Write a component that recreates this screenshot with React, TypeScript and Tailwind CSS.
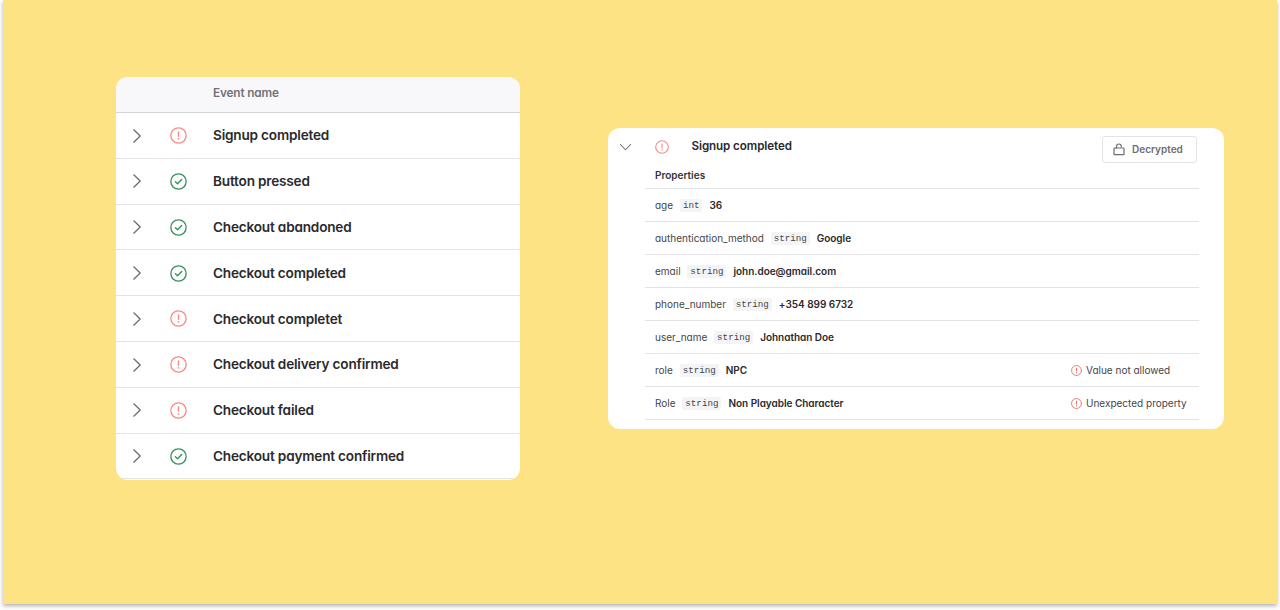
import clsx from "clsx";

type Status = "ok" | "error";

const events: { name: string; status: Status }[] = [
  { name: "Signup completed", status: "error" },
  { name: "Button pressed", status: "ok" },
  { name: "Checkout abandoned", status: "ok" },
  { name: "Checkout completed", status: "ok" },
  { name: "Checkout completet", status: "error" },
  { name: "Checkout delivery confirmed", status: "error" },
  { name: "Checkout failed", status: "error" },
  { name: "Checkout payment confirmed", status: "ok" },
];

const properties: { name: string; type: string; value: string; error?: string }[] = [
  { name: "age", type: "int", value: "36" },
  { name: "authentication_method", type: "string", value: "Google" },
  { name: "email", type: "string", value: "john.doe@gmail.com" },
  { name: "phone_number", type: "string", value: "+354 899 6732" },
  { name: "user_name", type: "string", value: "Johnathan Doe" },
  { name: "role", type: "string", value: "NPC", error: "Value not allowed" },
  { name: "Role", type: "string", value: "Non Playable Character", error: "Unexpected property" },
];

function StatusIcon({ status, className }: { status: Status; className?: string }) {
  return (
    <svg
      viewBox="0 0 16 16"
      fill="none"
      stroke="currentColor"
      strokeLinecap="round"
      strokeLinejoin="round"
      className={clsx("shrink-0", className)}
    >
      <circle cx="8" cy="8" r="7.2" strokeWidth="1.25" />
      {status === "ok" ? (
        <path d="M5.1 8.3l2 1.9 3.9-4" strokeWidth="1.3" />
      ) : (
        <>
          <path d="M8 4.6v4.2" strokeWidth="1.35" />
          <circle cx="8" cy="11.1" r="0.85" fill="currentColor" stroke="none" />
        </>
      )}
    </svg>
  );
}

function Chevron({ className }: { className?: string }) {
  return (
    <svg
      viewBox="0 0 8 14"
      fill="none"
      stroke="currentColor"
      strokeWidth="1.2"
      strokeLinecap="round"
      strokeLinejoin="round"
      className={clsx("shrink-0", className)}
    >
      <path d="M0.8 0.8L7.2 7L0.8 13.2" />
    </svg>
  );
}

function LockIcon() {
  return (
    <svg
      viewBox="0 0 12 13"
      fill="none"
      stroke="currentColor"
      strokeWidth="1.2"
      strokeLinejoin="round"
      strokeLinecap="round"
      className="h-[13px] w-3 shrink-0"
    >
      <rect x="1" y="5" width="10" height="6.6" rx="0.6" />
      <path d="M3.5 5V3.4a2.4 2.4 0 0 1 4.8 0v.3" />
    </svg>
  );
}

function EventList() {
  return (
    <div className="mt-[77px] ml-[113px] h-[403px] w-[404px] overflow-hidden rounded-xl bg-white">
      <div className="flex h-9 items-center border-b border-[#d4d4d9] bg-[#f8f8fb] pb-px pl-[97px] text-[11.8px] font-semibold tracking-[-0.15px] text-[#737377]">
        Event name
      </div>
      {events.map((event) => (
        <div key={event.name} className="flex h-[45.8px] items-center border-b border-[#e3e3e6] pt-[0.5px] pl-[17px]">
          <Chevron className="h-[14px] w-2 text-[#6a6a6e]" />
          <StatusIcon
            status={event.status}
            className={clsx(
              "ml-[29px] h-[17px] w-[17px]",
              event.status === "ok" ? "text-[#36915f]" : "text-[#f98b84]"
            )}
          />
          <span className="ml-[26px] text-[13.6px] font-semibold tracking-[-0.19px] text-[#2a2a2d]">
            {event.name}
          </span>
        </div>
      ))}
    </div>
  );
}

function EventDetails() {
  return (
    <div className="mt-32 ml-[88px] h-[301px] w-[616px] rounded-xl bg-white">
      <div className="flex h-[37px] pl-[11px]">
        <div className="flex h-[37px] items-center">
          <span className="flex w-3 justify-center">
            <Chevron className="h-[12px] w-[7px] rotate-90 text-[#6a6a6e]" />
          </span>
          <StatusIcon status="error" className="ml-6 h-[14px] w-[14px] text-[#f98b84]" />
          <span className="ml-[22.5px] pt-px text-[11.6px] font-semibold tracking-[-0.08px] text-[#2a2a2d]">
            Signup completed
          </span>
        </div>
        <button className="mt-2 mr-[27px] ml-auto flex h-[27px] w-[95px] items-center rounded-[3px] border border-[#e3e3e6] pl-[10px] text-[10px] font-semibold text-[#6d6d71]">
          <LockIcon />
          <span className="ml-[7px]">Decrypted</span>
        </button>
      </div>
      <div className="mr-[25px] ml-[37px] text-[10px] text-[#454549]">
        <div className="flex h-6 items-center border-b border-[#e3e3e6] pb-[2px] pl-[10px] font-semibold text-[#333336]">
          Properties
        </div>
        {properties.map((prop) => (
          <div key={prop.name} className="flex h-[33.05px] items-center border-b border-[#e3e3e6] pt-px pl-[10px]">
            <span>{prop.name}</span>
            <code className="ml-[6.8px] flex h-[13px] items-center rounded-[2px] bg-[#f4f4f6] px-[3px] font-['Liberation_Mono',monospace] text-[9.2px] text-[#454549]">
              {prop.type}
            </code>
            <span className="ml-[7px] font-semibold tracking-[-0.03px] text-[#2a2a2d]">{prop.value}</span>
            {prop.error && (
              <span className="ml-auto flex w-[128px] items-center gap-1">
                <StatusIcon status="error" className="h-[11px] w-[11px] text-[#ee6661]" />
                {prop.error}
              </span>
            )}
          </div>
        ))}
      </div>
    </div>
  );
}

export default function App() {
  return (
    <div className="h-[610px] w-[1280px] overflow-hidden bg-white px-[3px] font-['Inter',sans-serif] [font-feature-settings:'cv11']">
      <div className="flex h-[604px] items-start bg-[#fde384] shadow-[0_2px_4px_rgba(0,0,0,0.3)]">
        <EventList />
        <EventDetails />
      </div>
    </div>
  );
}
